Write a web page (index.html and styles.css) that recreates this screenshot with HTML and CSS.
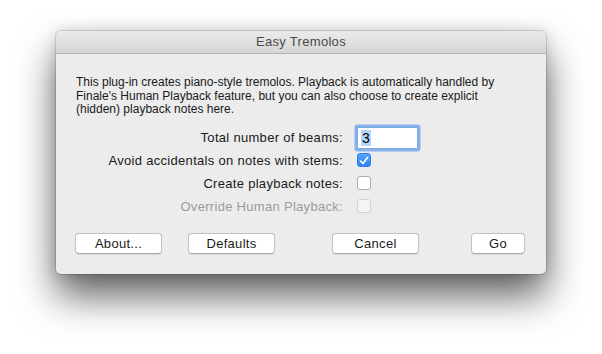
FILE: index.html
```html
<!DOCTYPE html>
<html lang="en">
<head>
    <meta charset="UTF-8">
    <title>Easy Tremolos</title>
    <link rel="stylesheet" href="styles.css">
</head>
<body>
    <div class="window">
        <div class="titlebar">Easy Tremolos</div>
        <div class="content">
            <p class="intro">This plug-in creates piano-style tremolos. Playback is automatically handled by<br>Finale's Human Playback feature, but you can also choose to create explicit<br>(hidden) playback notes here.</p>
            <div class="form">
                <label class="row-label" for="beams">Total number of beams:</label>
                <div class="row-control"><div class="field"><span class="sel">3</span></div></div>

                <label class="row-label">Avoid accidentals on notes with stems:</label>
                <div class="row-control"><span class="check checked">
                    <svg width="10" height="9" viewBox="0 0 10 9"><path d="M1.5 5 L4 7.5 L8.5 1.5" fill="none" stroke="#fff" stroke-width="1.6" stroke-linecap="round" stroke-linejoin="round"/></svg>
                </span></div>

                <label class="row-label">Create playback notes:</label>
                <div class="row-control"><span class="check"></span></div>

                <label class="row-label disabled">Override Human Playback:</label>
                <div class="row-control"><span class="check off"></span></div>
            </div>
            <div class="buttons">
                <button class="btn">About...</button>
                <button class="btn">Defaults</button>
                <button class="btn cancel">Cancel</button>
                <button class="btn go">Go</button>
            </div>
        </div>
    </div>
</body>
</html>
```

FILE: styles.css
```css
* {
    margin: 0;
    padding: 0;
    box-sizing: border-box;
}

html, body {
    height: 100%;
}

body {
    font-family: 'Liberation Sans', Arial, sans-serif;
    background: #fff;
    color: #1a1a1a;
    padding: 31px 0 0 56px;
}

.window {
    width: 490px;
    height: 243px;
    background: #ececec;
    border-radius: 5px;
    box-shadow: 0 0 0 1px rgba(0, 0, 0, 0.12),
                0 0 14px rgba(0, 0, 0, 0.14),
                0 22px 38px rgba(0, 0, 0, 0.62);
    overflow: hidden;
}

.titlebar {
    height: 23px;
    background: linear-gradient(#ebebeb, #d5d5d5);
    border-bottom: 1px solid #b5b5b5;
    text-align: center;
    font-size: 13px;
    letter-spacing: 0.3px;
    line-height: 22px;
    color: #4a4a4a;
}

.content {
    padding: 22px 20px 0 20px;
}

.intro {
    font-size: 12px;
    line-height: 13.5px;
    color: #1a1a1a;
    white-space: nowrap;
}

.form {
    display: grid;
    grid-template-columns: 267px 1fr;
    grid-template-rows: 22px 23px 23px 23px;
    column-gap: 14px;
    margin-top: 10px;
    font-size: 13px;
    letter-spacing: 0.3px;
}

.row-label {
    text-align: right;
    display: flex;
    align-items: center;
    justify-content: flex-end;
}

.row-label.disabled {
    color: #9b9b9b;
}

.row-control {
    display: flex;
    align-items: center;
}

.field {
    width: 61px;
    height: 22px;
    background: #fff;
    border: 1px solid #7ea8dc;
    box-shadow: 0 0 0 2.5px #86b3ee;
    border-radius: 1px;
    padding: 3px 0 0 3px;
    font-size: 14px;
    line-height: 15px;
    color: #000;
}

.sel {
    background: #b3d4fc;
    padding: 0 1px;
}

.check {
    width: 14px;
    height: 14px;
    border-radius: 3px;
    background: #fff;
    border: 1px solid #adadad;
    display: flex;
    align-items: center;
    justify-content: center;
}

.check.checked {
    background: linear-gradient(#5aa4fb, #2a84f4);
    border-color: #2f7fe6;
}

.check.off {
    background: #f4f4f4;
    border-color: #d2d2d2;
}

.buttons {
    display: flex;
    margin-top: 15px;
}

.btn {
    width: 87px;
    height: 21px;
    font-family: 'Liberation Sans', Arial, sans-serif;
    font-size: 13px;
    letter-spacing: 0.3px;
    color: #1a1a1a;
    background: #fff;
    border: 1px solid #c2c2c2;
    border-bottom-color: #a8a8a8;
    border-radius: 4px;
    box-shadow: 0 0.5px 1px rgba(0, 0, 0, 0.08);
    margin-left: -1px;
}

.btn + .btn {
    margin-left: 26px;
}

.btn.cancel {
    margin-left: 57px;
}

.btn.go {
    width: 54px;
    margin-left: 52px;
}
```
